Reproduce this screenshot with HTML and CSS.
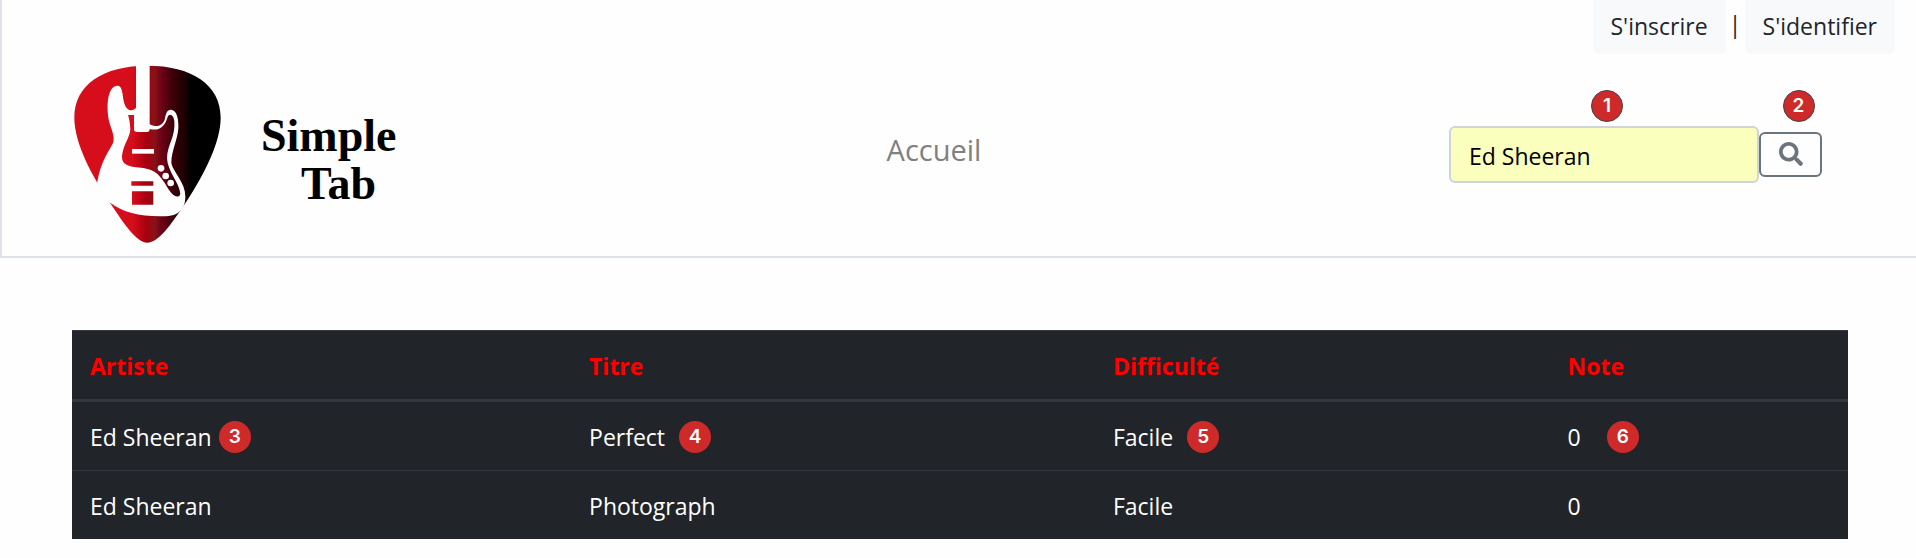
FILE: index.html
```html
<!DOCTYPE html>
<html lang="fr">
<head>
  <meta charset="utf-8">
  <meta name="viewport" content="width=device-width, initial-scale=1">
  <title>Simple Tab</title>
  <link rel="stylesheet" href="styles.css">
</head>
<body>
  <header class="site-header">
    <div class="account">
      <a class="account-link" href="#">S'inscrire</a>
      <span class="account-separator">|</span>
      <a class="account-link" href="#">S'identifier</a>
    </div>
    <div class="main-bar">
      <a class="brand" href="#">
        <svg class="brand-mark" viewBox="42 32 441 534" aria-hidden="true">
          <defs>
            <linearGradient id="pick" gradientUnits="userSpaceOnUse" x1="43" y1="0" x2="482" y2="0">
              <stop offset="0.40" stop-color="#d60d1b"/>
              <stop offset="0.49" stop-color="#a8000f"/>
              <stop offset="0.55" stop-color="#861318"/>
              <stop offset="0.60" stop-color="#6c0016"/>
              <stop offset="0.68" stop-color="#380006"/>
              <stop offset="0.77" stop-color="#160003"/>
              <stop offset="0.79" stop-color="#000"/>
            </linearGradient>
          </defs>
          <path fill="url(#pick)" d="M43 190C43 90 130 34 262 34S482 90 482 190C482 265 432 362 372 453C330 515 295 565 262 565S190 505 150 445C100 370 43 270 43 190Z"/>
          <path fill="#fefefe" d="M228 30H269V210C288 220 306 216 314 196C318 176 322 165 333 166C350 168 356 190 355 222C352 260 334 290 334 326C340 356 378 385 376 430C375 450 370 460 360 470C345 485 325 486 300 486C235 485 190 475 148 444L110 402C114 340 140 300 158 268C168 245 150 220 145 190C138 145 146 94 172 94C190 94 186 125 194 150C200 166 212 176 228 160Z"/>
          <path fill="url(#pick)" d="M204 182H222V225Q222 233 231 233H261Q269 233 269 224C300 232 316 212 322 190C326 176 340 178 343 200C347 248 322 270 321 312C322 350 358 386 361 418C358 431 344 428 334 416C310 386 304 350 250 341C210 337 185 335 186 305C190 270 210 250 211 225C210 205 208 195 204 182Z"/>
          <path fill="#fefefe" d="M216 284H282V298H216Z"/>
          <circle cx="303" cy="342" r="10" fill="#fefefe"/>
          <circle cx="317" cy="365" r="10" fill="#fefefe"/>
          <circle cx="332" cy="386" r="10" fill="#fefefe"/>
          <path fill="url(#pick)" d="M214 381H280V394H214ZM216 411H280V451H216Z"/>
        </svg>
        <span class="brand-name">
          <span>Simple</span>
          <span class="brand-second">Tab</span>
        </span>
      </a>
      <nav>
        <a class="nav-link" href="#">Accueil</a>
      </nav>
      <form class="search" role="search">
        <div class="search-field">
          <input class="search-input" type="text" value="Ed Sheeran" aria-label="Rechercher">
          <span class="badge badge-over">1</span>
        </div>
        <div class="search-action">
          <button class="search-button" type="button" aria-label="Lancer la recherche">
            <svg class="search-icon" viewBox="0 0 512 512" aria-hidden="true">
              <path fill="currentColor" d="M505 442.700 405.300 343c-4.500-4.500-10.600-7-17-7H372c27.600-35.300 44-79.700 44-128C416 93.100 322.900 0 208 0S0 93.100 0 208s93.100 208 208 208c48.300 0 92.700-16.400 128-44v16.300c0 6.400 2.500 12.500 7 17l99.700 99.700c9.400 9.400 24.600 9.400 33.900 0l28.300-28.300c9.400-9.400 9.400-24.600.1-34zM208 336c-70.700 0-128-57.200-128-128 0-70.700 57.200-128 128-128 70.700 0 128 57.200 128 128 0 70.700-57.200 128-128 128z"/>
            </svg>
          </button>
          <span class="badge badge-over badge-over-action">2</span>
        </div>
      </form>
    </div>
  </header>
  <main class="content">
    <table class="tabs">
      <colgroup>
        <col class="col-artist">
        <col class="col-title">
        <col class="col-level">
        <col>
      </colgroup>
      <thead>
        <tr>
          <th scope="col">Artiste</th>
          <th scope="col">Titre</th>
          <th scope="col">Difficulté</th>
          <th scope="col">Note</th>
        </tr>
      </thead>
      <tbody>
        <tr>
          <td><div class="cell cell-tight">Ed Sheeran <span class="badge">3</span></div></td>
          <td><div class="cell">Perfect <span class="badge">4</span></div></td>
          <td><div class="cell">Facile <span class="badge">5</span></div></td>
          <td><div class="cell cell-wide">0 <span class="badge">6</span></div></td>
        </tr>
        <tr>
          <td>Ed Sheeran</td>
          <td>Photograph</td>
          <td>Facile</td>
          <td>0</td>
        </tr>
      </tbody>
    </table>
  </main>
</body>
</html>
```
FILE: styles.css
```css
* {
  box-sizing: border-box;
}

body {
  margin: 0;
  background: #fefefe;
  color: #212529;
  font-family: "Segoe UI", "Open Sans", "Noto Sans", sans-serif;
  font-size: 23px;
  line-height: 32px;
}

a {
  color: inherit;
  text-decoration: none;
}

.site-header {
  border-left: 2px solid #dee2e6;
  border-bottom: 2px solid #dee2e6;
}

.account {
  display: flex;
  justify-content: flex-end;
  padding-right: 21px;
}

.account-link {
  padding: 10px 18px 12px;
  border-radius: 0 0 6px 6px;
  background: #f8f9fa;
}

.account-separator {
  width: 19px;
  padding-top: 8px;
  text-align: center;
}

.main-bar {
  display: grid;
  grid-template-columns: 29fr auto 30fr;
  align-items: center;
  padding: 11px 94px 13px 72px;
}

.brand {
  display: flex;
  align-items: center;
  gap: 40px;
}

.brand-mark {
  width: 147px;
  height: 178px;
}

.brand-name {
  display: flex;
  flex-direction: column;
  padding-top: 12px;
  color: #000;
  font-family: "Liberation Serif", serif;
  font-size: 46px;
  font-weight: 700;
  line-height: 48px;
}

.brand-second {
  padding-left: 40px;
}

.nav-link {
  display: block;
  padding-bottom: 8px;
  color: #808080;
  font-size: 29px;
  font-weight: 500;
}

.search {
  display: flex;
  align-items: center;
  justify-content: flex-end;
}

.search-field,
.search-action {
  position: relative;
}

.search-input {
  display: block;
  width: 310px;
  height: 57px;
  padding: 4px 18px 0;
  border: 2px solid #ced4da;
  border-radius: 6px;
  background: #faffbd;
  color: #000;
  font: inherit;
}

.search-button {
  display: flex;
  align-items: center;
  justify-content: center;
  width: 63px;
  height: 45px;
  padding: 0;
  border: 2px solid #6c757d;
  border-radius: 6px;
  background: transparent;
  color: #6c757d;
}

.search-icon {
  width: 24px;
  height: 24px;
}

.badge {
  display: flex;
  flex: none;
  align-items: center;
  justify-content: center;
  width: 32px;
  height: 32px;
  border-radius: 50%;
  background: #cf2a2a;
  color: #fff;
  font-family: Inter, sans-serif;
  font-size: 19px;
  font-weight: 600;
}

.badge-over {
  position: absolute;
  bottom: 100%;
  left: 50%;
  margin: 0 0 4px -13px;
  border: 1px solid #444;
}

.badge-over-action {
  margin: 0 0 10px -8px;
}

.content {
  padding: 72px 68px 19px 72px;
}

.tabs {
  width: 100%;
  border-collapse: separate;
  border-spacing: 0;
  table-layout: fixed;
  background: #212529;
  color: #fff;
  text-align: left;
}

.col-artist {
  width: 28.1%;
}

.col-title {
  width: 29.5%;
}

.col-level {
  width: 25.6%;
}

.tabs th,
.tabs td {
  padding: 19px 18px 17px;
  border-top: 1px solid #32383e;
}

.tabs th {
  border-bottom: 3px solid #32383e;
  color: #f00;
  font-weight: 700;
}

.tabs tbody tr:first-child td {
  border-top: 0;
}

.cell {
  display: flex;
  align-items: center;
  gap: 14px;
}

.cell-tight {
  gap: 7px;
}

.cell-wide {
  gap: 26px;
}
```
